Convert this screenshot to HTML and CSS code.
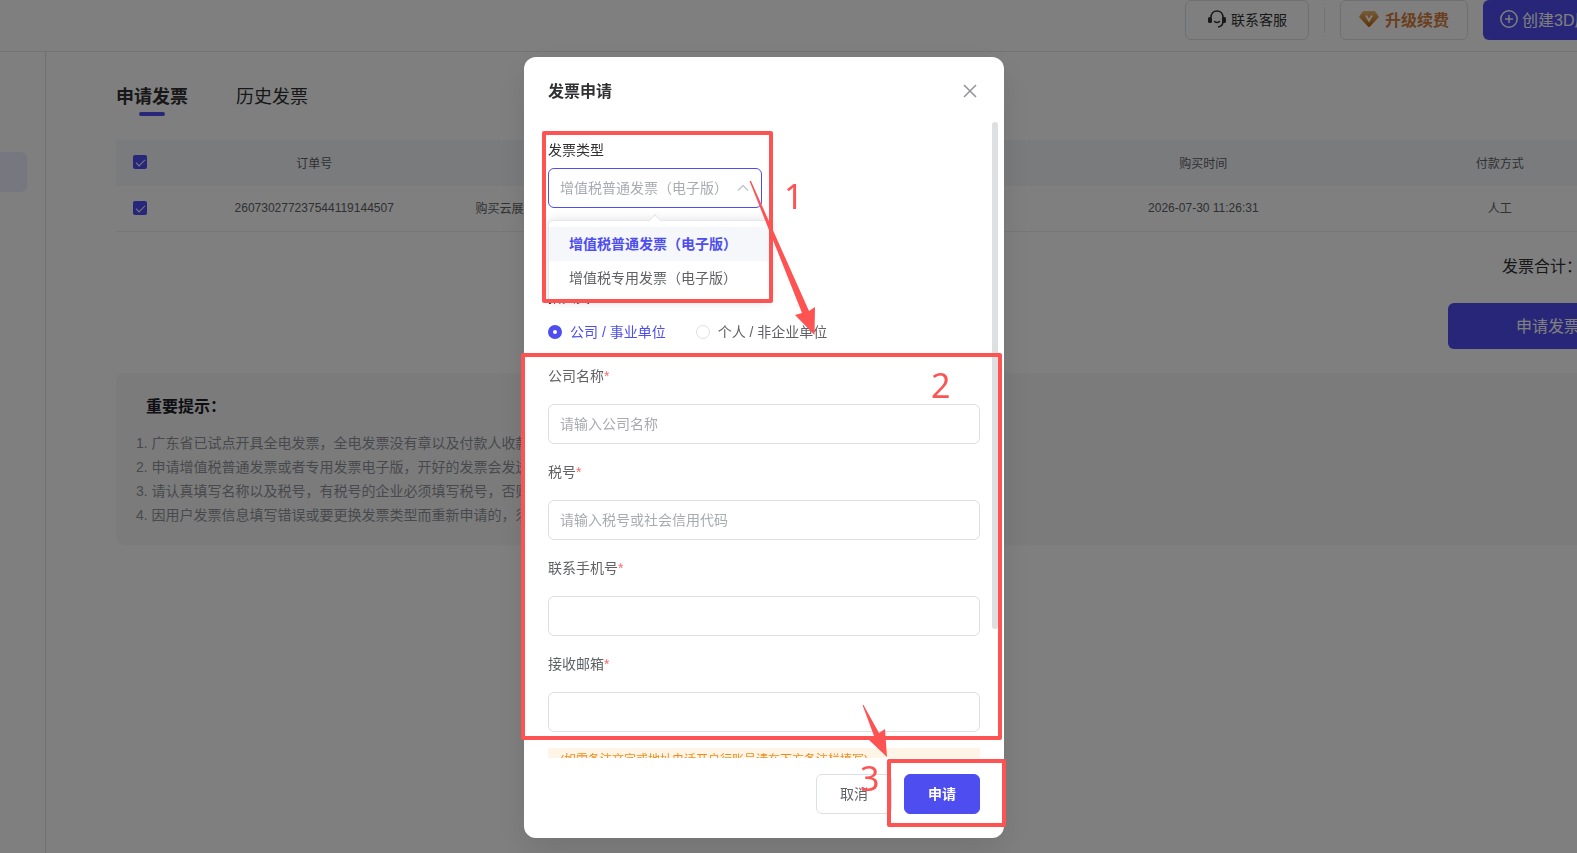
FILE: index.html
```html
<!DOCTYPE html>
<html lang="zh-CN">
<head>
  <meta charset="UTF-8" />
  <meta name="viewport" content="width=device-width, initial-scale=1.0" />
  <title>发票申请</title>
  <link rel="stylesheet" href="styles.css">
</head>
<body>
  <div class="app">
    <header class="topbar">
      <button class="top-btn service" type="button">
        <svg width="20" height="20" viewBox="0 0 20 20" fill="none">
          <path d="M4 8.500C4 4.500 6.500 2 10 2s6 2.500 6 6.500v4c0 3-2 5-5 5.500" stroke="#333" stroke-width="1.600"/>
          <rect x="1" y="8" width="4" height="6" rx="1.500" fill="#333"/>
          <rect x="15" y="8" width="4" height="6" rx="1.500" fill="#333"/>
          <path d="M7.500 12.500q2.500 2 5 0" stroke="#333" stroke-width="1.500" stroke-linecap="round"/>
        </svg>
        联系客服
      </button>
      <span class="divider"></span>
      <button class="top-btn upgrade" type="button">
        <svg width="20" height="18" viewBox="0 0 20 18">
          <defs>
            <linearGradient id="gold" x1="0" y1="0" x2="0" y2="1">
              <stop offset="0" stop-color="#f0b870"/>
              <stop offset="1" stop-color="#b9640e"/>
            </linearGradient>
          </defs>
          <path d="M5 1h10q1 0 1.500 .7L19.500 6q.5 .8 0 1.500L11 16.500q-1 1-2 0L.5 7.500Q0 6.800 .5 6L3.500 1.700Q4 1 5 1z" fill="url(#gold)"/>
          <path d="M7 5.500l3 5 3-5" fill="none" stroke="#fff" stroke-width="2"/>
        </svg>
        升级续费
      </button>
      <button class="top-btn create" type="button">
        <svg width="18" height="18" viewBox="0 0 18 18" fill="none" stroke="#fff" stroke-width="1.500">
          <circle cx="9" cy="9" r="8.200"/>
          <path d="M9 5v8M5 9h8"/>
        </svg>
        创建3D展厅
      </button>
    </header>

    <div class="layout">
      <aside class="sidebar">
        <div class="side-item"></div>
      </aside>
      <main class="content">
        <nav class="tabs">
          <a class="tab active" href="#">申请发票</a>
          <a class="tab" href="#">历史发票</a>
        </nav>

        <table class="orders">
          <thead>
            <tr>
              <th class="check"><input type="checkbox" aria-label="全选" checked></th>
              <th>订单号</th>
              <th></th>
              <th></th>
              <th>购买时间</th>
              <th>付款方式</th>
            </tr>
          </thead>
          <tbody>
            <tr>
              <td class="check"><input type="checkbox" aria-label="选择订单" checked></td>
              <td>260730277237544119144507</td>
              <td class="product">购买云展</td>
              <td></td>
              <td>2026-07-30 11:26:31</td>
              <td>人工</td>
            </tr>
          </tbody>
        </table>

        <div class="summary">
          <div class="total">发票合计：</div>
          <button class="apply-btn" type="button">申请发票</button>
        </div>

        <section class="tips">
          <h3>重要提示：</h3>
          <p>1. 广东省已试点开具全电发票，全电发票没有章以及付款人收款</p>
          <p>2. 申请增值税普通发票或者专用发票电子版，开好的发票会发送</p>
          <p>3. 请认真填写名称以及税号，有税号的企业必须填写税号，否则</p>
          <p>4. 因用户发票信息填写错误或要更换发票类型而重新申请的，须</p>
        </section>
      </main>
    </div>
  </div>

  <div class="overlay">
    <form class="dialog">
      <div class="dialog-head">
        <h2>发票申请</h2>
        <button class="close" type="button" aria-label="关闭">
          <svg width="14" height="14" viewBox="0 0 14 14" stroke="#909399" stroke-width="1.500"><path d="M1 1l12 12M13 1L1 13"/></svg>
        </button>
      </div>

      <div class="dialog-body">
        <div class="type-field">
          <label for="type">发票类型</label>
          <div class="select-box">
            <select id="type">
              <option>增值税普通发票（电子版）</option>
              <option>增值税专用发票（电子版）</option>
            </select>
            <svg class="chevron" width="12" height="8" viewBox="0 0 12 8" fill="none" stroke="#c0c4cc" stroke-width="1.300"><path d="M1 6.500l5-5 5 5"/></svg>
            <div class="dropdown">
              <div class="option selected">增值税普通发票（电子版）</div>
              <div class="option">增值税专用发票（电子版）</div>
            </div>
          </div>
        </div>

        <div class="title-label">抬头类型</div>
        <div class="radios">
          <label class="radio"><input type="radio" name="title" checked><span>公司 / 事业单位</span></label>
          <label class="radio"><input type="radio" name="title"><span>个人 / 非企业单位</span></label>
        </div>

        <div class="field">
          <label for="company">公司名称<i>*</i></label>
          <input id="company" type="text" placeholder="请输入公司名称">
        </div>
        <div class="field">
          <label for="tax">税号<i>*</i></label>
          <input id="tax" type="text" placeholder="请输入税号或社会信用代码">
        </div>
        <div class="field">
          <label for="phone">联系手机号<i>*</i></label>
          <input id="phone" type="text">
        </div>
        <div class="field">
          <label for="email">接收邮箱<i>*</i></label>
          <input id="email" type="text">
        </div>
        <p class="hint">(如需备注文字或地址电话开户行账号请在下方备注栏填写)</p>
        <div class="thumb"></div>
      </div>

      <div class="dialog-foot">
        <button class="btn" type="button">取消</button>
        <button class="btn primary" type="submit">申请</button>
      </div>

      <!-- step markers -->
      <svg class="marks" width="480" height="781" viewBox="0 0 480 781">
        <g fill="none" stroke="#fd5353" stroke-width="4" stroke-linejoin="round">
          <rect x="20" y="76" width="227" height="168"/>
          <rect x="-1" y="298" width="477" height="383"/>
          <rect x="365" y="704" width="115" height="64"/>
        </g>
        <g fill="#fd5353">
          <path d="M225.500 124h1.500L285 254l6-4-.5 28L271 258l7-2z"/>
          <path d="M338.500 648h1L355 676l6-4 2 28-18-17 5-4z"/>
        </g>
        <g class="nums">
          <text x="260" y="152">1</text>
          <text x="407" y="341">2</text>
          <text x="336" y="734">3</text>
        </g>
      </svg>
    </form>
  </div>
</body>
</html>
```
FILE: styles.css
```css
* {
  box-sizing: border-box;
}
body, html {
  margin: 0;
  height: 100%;
  overflow: hidden;
  font-family: "Liberation Sans", "Noto Sans CJK SC", sans-serif;
  font-size: 14px;
  color: #303133;
  background: #fff;
}
button, input, select {
  font-family: inherit;
}
h2, h3, p {
  margin: 0;
}
a {
  color: inherit;
  text-decoration: none;
}

/* the page behind is a little wider than the window */
.app {
  width: calc(100% + 96px);
  min-height: 100%;
  display: flex;
  flex-direction: column;
}
.topbar {
  display: flex;
  justify-content: flex-end;
  height: 52px;
  padding-right: 40px;
  border-bottom: 1px solid #e4e7ed;
}
.top-btn {
  display: flex;
  align-items: center;
  justify-content: center;
  height: 40px;
  padding: 0 0 2px;
  border: 1px solid #dcdfe6;
  border-radius: 6px;
  background: #fff;
  white-space: nowrap;
}
.service {
  width: 124px;
  gap: 4px;
  font-size: 14px;
  color: #303133;
}
.divider {
  width: 1px;
  height: 26px;
  margin: 7px 15px;
  background: #e4e7ed;
}
.upgrade {
  width: 128px;
  gap: 6px;
  margin-right: 15px;
  font-size: 16px;
  font-weight: 600;
  color: #d47c3c;
}
.create {
  width: 150px;
  gap: 4px;
  justify-content: flex-start;
  padding-left: 17px;
  border: 0;
  background: #4e4df0;
  color: #fff;
  font-size: 16px;
}

.layout {
  flex: 1;
  display: flex;
}
.sidebar {
  width: 46px;
  padding-top: 100px;
  border-right: 1px solid #dfe0e6;
}
.side-item {
  width: 27px;
  height: 40px;
  border-radius: 0 6px 6px 0;
  background: #eeeffe;
}
.content {
  flex: 1;
  padding: 33px 25px 0 70px;
}
.tabs {
  display: flex;
  gap: 48px;
  height: 55px;
  font-size: 18px;
  line-height: 24px;
}
.tab.active {
  height: 33px;
  font-weight: 700;
}
.tab.active::after {
  content: "";
  display: block;
  width: 26px;
  height: 4px;
  margin: 3px auto 0;
  border-radius: 2px;
  background: #4e4df0;
}

.orders {
  width: 100%;
  table-layout: fixed;
  border-collapse: collapse;
  font-size: 12px;
  color: #606266;
  text-align: center;
}
.orders th {
  height: 46px;
  padding: 0 0 2px;
  font-weight: 400;
  background: #f5f7fa;
}
.orders td {
  height: 45px;
  padding: 0 0 1px;
  border-bottom: 1px solid #ebeef5;
}
.orders .check {
  width: 50px;
}
.orders .product {
  padding-left: 13px;
  text-align: left;
}
.orders input {
  display: block;
  appearance: none;
  width: 14px;
  height: 14px;
  margin: 0 17px;
  border-radius: 2px;
  background: #4e4df0;
}
.orders input::after {
  content: "";
  display: block;
  width: 4px;
  height: 8px;
  margin: 2px 5px;
  border: solid #fff;
  border-width: 0 1px 1px 0;
  transform: rotate(45deg);
}

.summary {
  display: flex;
  flex-direction: column;
  align-items: flex-end;
  padding-top: 23px;
}
.total {
  width: 146px;
  font-size: 16px;
  line-height: 24px;
}
.apply-btn {
  width: 200px;
  height: 46px;
  margin: 24px 0;
  padding: 0 0 2px;
  border: 0;
  border-radius: 6px;
  background: #4e4df0;
  color: #fff;
  font-size: 16px;
}
.tips {
  padding: 21px 20px 18px;
  border-radius: 8px;
  background: #f7f7f8;
  color: #909399;
  line-height: 24px;
}
.tips h3 {
  margin: 0 0 11px 10px;
  font-size: 16px;
  font-weight: 600;
  line-height: 26px;
  color: #1d2129;
}

.overlay {
  position: fixed;
  inset: 0;
  display: flex;
  justify-content: center;
  align-items: flex-start;
  padding: 57px 49px 0 0;
  background: rgba(0, 0, 0, 0.5);
}
.dialog {
  position: relative;
  width: 480px;
  border-radius: 12px;
  background: #fff;
  box-shadow: 0 12px 32px rgba(0, 0, 0, 0.1);
}
.dialog-head {
  display: flex;
  justify-content: space-between;
  align-items: center;
  height: 65px;
  padding: 3px 27px 0 24px;
}
.dialog-head h2 {
  padding-bottom: 2px;
  font-size: 16px;
  font-weight: 600;
}
.close {
  display: flex;
  padding: 0;
  border: 0;
  background: none;
}
.dialog-body {
  position: relative;
  height: 636px;
  padding: 18px 24px 0;
  overflow: hidden;
  line-height: 20px;
}
.type-field {
  margin-bottom: 79px;
}
.type-field label {
  display: block;
  margin-bottom: 8px;
}
.select-box {
  position: relative;
  width: 214px;
}
.select-box select {
  display: block;
  appearance: none;
  width: 100%;
  height: 40px;
  padding: 0 11px;
  border: 1px solid #4e4df0;
  border-radius: 6px;
  background: #fff;
  color: #a8abb2;
  font-size: 14px;
}
.chevron {
  position: absolute;
  right: 13px;
  top: 16px;
}
.dropdown {
  position: absolute;
  top: 52px;
  left: 0;
  z-index: 1;
  width: 222px;
  padding: 6px 0;
  border: 1px solid #e4e7ed;
  border-radius: 4px;
  background: #fff;
  box-shadow: 0 0 12px rgba(0, 0, 0, 0.12);
  color: #606266;
}
.dropdown::before {
  content: "";
  position: absolute;
  top: -5px;
  left: 101px;
  width: 9px;
  height: 9px;
  border: solid #e4e7ed;
  border-width: 1px 0 0 1px;
  background: #fff;
  transform: rotate(45deg);
}
.option {
  position: relative;
  padding: 0 20px;
  line-height: 34px;
  white-space: nowrap;
}
.option.selected {
  background: #f5f7fa;
  color: #4e4df0;
  font-weight: 700;
}
.radios {
  display: flex;
  gap: 30px;
  margin: 15px 0 24px;
}
.radio {
  display: flex;
  align-items: center;
  gap: 8px;
  color: #606266;
}
.radio input {
  appearance: none;
  width: 14px;
  height: 14px;
  margin: 0;
  border: 1px solid #dcdfe6;
  border-radius: 50%;
}
.radio input:checked {
  border: 5px solid #4e4df0;
}
.radio input:checked + span {
  color: #4e4df0;
}
.field {
  margin-bottom: 18px;
  color: #606266;
}
.field label {
  display: block;
  margin-bottom: 18px;
}
.field i {
  font-style: normal;
  color: #f56c6c;
}
.field input {
  display: block;
  width: 100%;
  height: 40px;
  padding: 0 11px;
  border: 1px solid #dcdfe6;
  border-radius: 6px;
  font-size: 14px;
}
.field input::placeholder {
  color: #a8abb2;
}
.hint {
  margin-top: -2px;
  padding: 0 12px;
  background: #fff5e6;
  color: #f08c1a;
  font-size: 12px;
  line-height: 24px;
}
.thumb {
  position: absolute;
  top: 0;
  right: 6px;
  width: 6px;
  height: 507px;
  border-radius: 3px;
  background: #dedfe0;
}
.dialog-foot {
  display: flex;
  justify-content: flex-end;
  gap: 12px;
  padding: 16px 24px 24px;
}
.btn {
  width: 76px;
  height: 40px;
  padding: 0 0 2px;
  border: 1px solid #dcdfe6;
  border-radius: 6px;
  background: #fff;
  color: #606266;
  font-size: 14px;
}
.btn.primary {
  border-color: #4e4df0;
  background: #4e4df0;
  color: #fff;
  font-weight: 600;
}

.marks {
  position: absolute;
  top: 0;
  left: 0;
  z-index: 2;
  overflow: visible;
  pointer-events: none;
}
.nums {
  fill: #fd5353;
  font-family: "Noto Sans", sans-serif;
  font-size: 34px;
}
```
